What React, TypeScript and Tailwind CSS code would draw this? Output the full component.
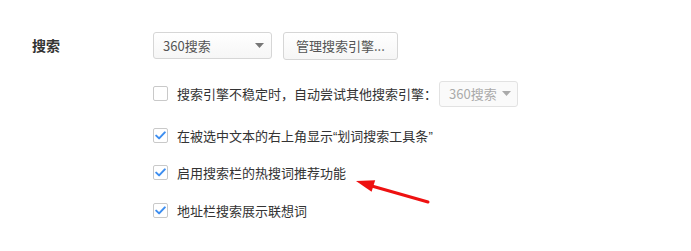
import React from 'react';

function Caret({ color = '#777' }: { color?: string }) {
  return (
    <svg width="9" height="5" viewBox="0 0 9 5" className="shrink-0">
      <path d="M0 0 L9 0 L4.5 5 Z" fill={color} />
    </svg>
  );
}

function Checkbox({ checked }: { checked: boolean }) {
  return (
    <span className="w-[15px] h-[15px] shrink-0 rounded-[2px] border border-[#c9c9c9] bg-white flex items-center justify-center">
      {checked && (
        <svg width="11" height="9" viewBox="0 0 11 9">
          <path d="M1.2 4.6 L4.1 7.4 L9.8 1.4" fill="none" stroke="#3d8ef0" strokeWidth="2" strokeLinecap="round" strokeLinejoin="round" />
        </svg>
      )}
    </span>
  );
}

function CheckRow({ checked, children, className = '' }: { checked: boolean; children: React.ReactNode; className?: string }) {
  return (
    <div className={`flex items-center h-[15px] ${className}`}>
      <Checkbox checked={checked} />
      <span className="ml-[9px] text-[13px] leading-none text-[#333]">{children}</span>
    </div>
  );
}

export default function App() {
  return (
    <div
      className="relative w-[691px] h-[251px] bg-white overflow-hidden"
      style={{ fontFamily: '"Noto Sans CJK SC", "Liberation Sans", sans-serif' }}
    >
      <div className="flex pt-[32px] pl-[32px]">
        <div className="w-[121px] h-[27px] flex items-center text-[14px] font-bold text-[#333]">搜索</div>

        <div className="flex flex-col">
          <div className="flex items-center h-[27px]">
            <div className="w-[119px] h-[27px] rounded-[3px] border border-[#d6d6d6] bg-gradient-to-b from-white to-[#f6f6f6] flex items-center justify-between pl-[9px] pr-[7px] text-[13px] text-[#555]">
              <span>360搜索</span>
              <Caret />
            </div>
            <div className="ml-[11px] w-[115px] h-[28px] rounded-[3px] border border-[#d6d6d6] bg-gradient-to-b from-white to-[#f6f6f6] flex items-center pl-[12px] text-[13px] text-[#555]">
              管理搜索引擎...
            </div>
          </div>

          <div className="flex items-center h-[27px] mt-[21px]">
            <Checkbox checked={false} />
            <span className="ml-[9px] text-[13px] leading-none text-[#333]">搜索引擎不稳定时，自动尝试其他搜索引擎：</span>
            <div className="ml-[2px] w-[79px] h-[26px] rounded-[3px] border border-[#e2e2e2] bg-[#fafafa] flex items-center justify-between pl-[9px] pr-[6px] text-[13px] text-[#aaa]">
              <span>360搜索</span>
              <Caret color="#aaa" />
            </div>
          </div>

          <CheckRow checked className="mt-[21px]">
            在被选中文本的右上角显示<span className="font-['Liberation_Sans']">“</span>划词搜索工具条<span className="font-['Liberation_Sans']">”</span>
          </CheckRow>
          <CheckRow checked className="mt-[22px]">启用搜索栏的热搜词推荐功能</CheckRow>
          <CheckRow checked className="mt-[23px]">地址栏搜索展示联想词</CheckRow>
        </div>
      </div>

      <svg className="absolute left-0 top-0 pointer-events-none" width="691" height="251">
        <line x1="428" y1="202" x2="370" y2="185.5" stroke="#ee1111" strokeWidth="3" strokeLinecap="round" />
        <path d="M356 181 L375.2 180.2 L371.6 191.8 Z" fill="#ee1111" />
      </svg>
    </div>
  );
}
